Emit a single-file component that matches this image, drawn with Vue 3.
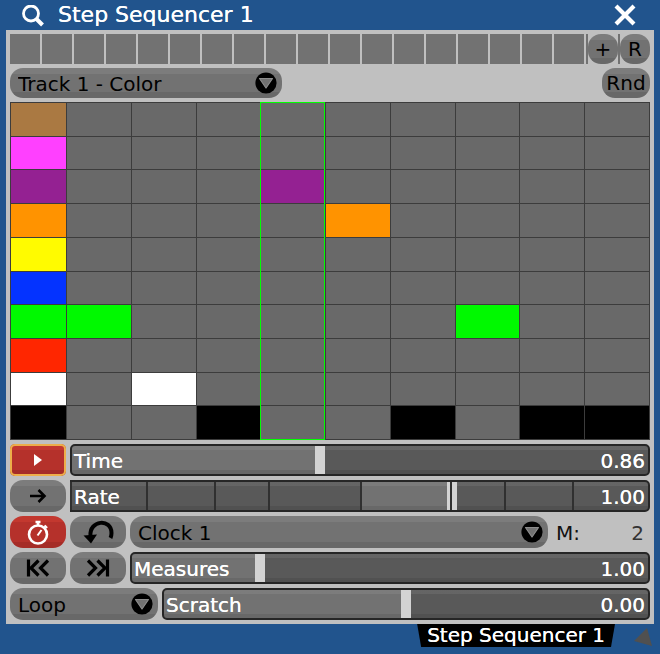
<template>
  <div class="window">
    <header class="title-bar">
      <svg class="icon-search" viewBox="0 0 22 22">
        <circle cx="9" cy="8.5" r="7.5" fill="none" stroke="#fff" stroke-width="2.8" />
        <path d="M14 13.5 L20.5 20" stroke="#fff" stroke-width="4" />
      </svg>
      <h1 class="title">Step Sequencer 1</h1>
      <button class="close" aria-label="Close">
        <svg viewBox="0 0 22 22">
          <path d="M2 2 L20 20 M20 2 L2 20" stroke="#fff" stroke-width="4.2" />
        </svg>
      </button>
    </header>

    <main class="panel">
      <!-- presets -->
      <div class="row presets">
        <div class="preset-strip">
          <button v-for="n in 19" :key="n" class="preset" :aria-label="'Preset ' + n"></button>
        </div>
        <button class="btn round" @click="addPreset">+</button>
        <span class="sliver"></span>
        <button class="btn round">R</button>
      </div>

      <!-- track -->
      <div class="row spread">
        <div class="dropdown track">
          <select v-model="track" class="btn" aria-label="Track">
            <option>Track 1 - Color</option>
          </select>
          <svg class="arrow" viewBox="0 0 22 22">
            <circle cx="11" cy="11" r="10.6" />
            <path d="M4.5 6.5 H17.5 L11 16 Z" fill="#727272" stroke="#8c8c8c" stroke-width="1.2" stroke-linejoin="round" />
          </svg>
        </div>
        <button class="btn rnd" @click="randomize">Rnd</button>
      </div>

      <!-- steps -->
      <div class="steps">
        <template v-for="(color, r) in colors" :key="color">
          <span class="cell" :style="{ background: color, gridRow: r + 1, gridColumn: 1 }"></span>
          <button
            v-for="(value, c) in steps"
            :key="c"
            class="cell"
            :aria-label="'Step ' + (c + 1) + ', row ' + (r + 1)"
            :style="{ background: value === r ? color : null, gridRow: r + 1, gridColumn: c + 2 }"
            @click="toggle(c, r)"
          ></button>
        </template>
        <span class="playhead" :style="{ gridColumn: current + 2 }"></span>
      </div>

      <!-- transport -->
      <div class="row">
        <button class="btn small play" aria-label="Play">
          <svg width="56" height="32" viewBox="0 0 56 32">
            <path d="M24 10 V22 L32 16 Z" fill="#fff" />
          </svg>
        </button>
        <div class="slider">
          <input id="time" v-model.number="time" type="range" min="0" max="2" step="any" :style="fill(time / 2)" />
          <label for="time">Time</label>
          <output for="time">{{ time.toFixed(2) }}</output>
        </div>
      </div>

      <div class="row">
        <button class="btn small" aria-label="Forward">
          <svg width="56" height="32" viewBox="0 0 56 32">
            <path d="M20 16 H34 M28.5 10 L34.5 16 L28.5 22" fill="none" stroke="#000" stroke-width="2.6" />
          </svg>
        </button>
        <div class="slider rate">
          <input id="rate" v-model.number="rate" type="range" min="0" max="1" step="any" :style="fill(rate, 50)" />
          <span v-for="t in ticks" :key="t" class="tick" :style="{ left: t + '%' }"></span>
          <label for="rate">Rate</label>
          <output for="rate">1.00</output>
        </div>
      </div>

      <div class="row">
        <button class="btn small on" aria-label="Clock sync">
          <svg width="56" height="32" viewBox="0 0 56 32">
            <circle cx="28" cy="18.5" r="9" fill="none" stroke="#fff" stroke-width="2.6" />
            <path d="M25.5 6 H30.5 M28 5 V10" stroke="#fff" stroke-width="2.6" />
            <path d="M34.5 9.5 L37 12" stroke="#fff" stroke-width="2.4" />
            <path d="M27.5 19.5 L31.5 14" stroke="#fff" stroke-width="2" />
          </svg>
        </button>
        <button class="btn small" aria-label="Reverse">
          <svg width="56" height="32" viewBox="0 0 56 32">
            <path d="M20.5 20 C19 4 41.5 2 41.5 17 Q41.5 20 40.5 22" fill="none" stroke="#000" stroke-width="4" />
            <path d="M13.5 19.5 L27 18.5 L21 27.5 Z" />
          </svg>
        </button>
        <div class="dropdown grow">
          <select v-model="clock" class="btn" aria-label="Clock">
            <option>Clock 1</option>
          </select>
          <svg class="arrow" viewBox="0 0 22 22">
            <circle cx="11" cy="11" r="10.6" />
            <path d="M4.5 6.5 H17.5 L11 16 Z" fill="#727272" stroke="#8c8c8c" stroke-width="1.2" stroke-linejoin="round" />
          </svg>
        </div>
        <div class="field">
          <label for="multiplier">M:</label>
          <input id="multiplier" v-model="multiplier" type="text" />
        </div>
      </div>

      <div class="row">
        <button class="btn small" aria-label="Previous">
          <svg width="56" height="32" viewBox="0 0 56 32">
            <path d="M18.5 7.5 V24.5 M28.5 8.5 L21 16 L28.5 23.5 M38 8.5 L30.5 16 L38 23.5" fill="none" stroke="#000" stroke-width="3.2" />
          </svg>
        </button>
        <button class="btn small" aria-label="Next">
          <svg width="56" height="32" viewBox="0 0 56 32">
            <path d="M37.5 7.5 V24.5 M27.5 8.5 L35 16 L27.5 23.5 M18 8.5 L25.5 16 L18 23.5" fill="none" stroke="#000" stroke-width="3.2" />
          </svg>
        </button>
        <div class="slider">
          <input id="measures" v-model.number="measures" type="range" min="0" max="1" step="any" :style="fill(measures)" />
          <label for="measures">Measures</label>
          <output for="measures">1.00</output>
        </div>
      </div>

      <div class="row">
        <div class="dropdown mode">
          <select v-model="mode" class="btn" aria-label="Mode">
            <option>Loop</option>
          </select>
          <svg class="arrow" viewBox="0 0 22 22">
            <circle cx="11" cy="11" r="10.6" />
            <path d="M4.5 6.5 H17.5 L11 16 Z" fill="#727272" stroke="#8c8c8c" stroke-width="1.2" stroke-linejoin="round" />
          </svg>
        </div>
        <div class="slider">
          <input id="scratch" v-model.number="scratch" type="range" min="-1" max="1" step="any" :style="fill((scratch + 1) / 2)" />
          <label for="scratch">Scratch</label>
          <output for="scratch">{{ scratch.toFixed(2) }}</output>
        </div>
      </div>
    </main>

    <footer class="status">
      <span class="tab">Step Sequencer 1</span>
      <svg class="grip" width="20" height="20" viewBox="0 0 20 20">
        <path d="M14 0 L1 13 L19 18 Z" fill="#505050" />
      </svg>
    </footer>
  </div>
</template>

<script setup>
import { ref } from 'vue'

const colors = [
  '#aa7942', '#ff40ff', '#942192', '#ff9300', '#fffb00',
  '#0433ff', '#00f900', '#ff2600', '#ffffff', '#000000'
]
// row index of the active color for each step
const steps = ref([6, 8, 9, 2, 3, 9, 6, 9, 9])
const current = ref(3)

const track = ref('Track 1 - Color')
const clock = ref('Clock 1')
const mode = ref('Loop')
const multiplier = ref('2')

const time = ref(0.86)
const rate = ref(0.662)
const measures = ref(0.243)
const scratch = ref(0)
const presetCount = ref(0)

// tick positions on the rate slider, in percent
const ticks = [0, 13.1, 24.8, 34.1, 50, 65.6, 74.8, 86.6]

function fill(ratio, from = 0) {
  return { '--from': from + '%', '--to': ratio * 100 + '%' }
}

function toggle(c, r) {
  steps.value[c] = steps.value[c] === r ? -1 : r
}

function addPreset() { presetCount.value++ }

function randomize() {
  steps.value = steps.value.map(() => Math.floor(Math.random() * colors.length))
}
</script>

<style>
body { margin: 0; background: #21548d; }
</style>

<style scoped>
* { box-sizing: border-box; }
.window {
  display: flex;
  flex-direction: column;
  min-height: 100vh;
  padding: 0 6px;
  background: #21548d;
  font-family: "DejaVu Sans", sans-serif;
  font-size: 20px;
  line-height: 24px;
}
button, select, input { font: inherit; margin: 0; }
button { padding: 0; border: 0; }
svg { display: block; }

.title-bar { display: flex; align-items: center; height: 30px; padding: 0 18px 0 16px; color: #fff; }
.icon-search { width: 22px; height: 22px; margin-top: 2px; }
.title { flex: 1; margin: 0 0 0 14px; font-size: 22px; font-weight: normal; line-height: 32px; }
.close { width: 22px; height: 22px; background: none; }
/* light text is drawn slightly heavier */
.title, .slider label, .slider output, .tab { text-shadow: 0 0 0 #fff; }

.panel { flex: 1; display: flex; flex-direction: column; gap: 4px; padding: 4px; background: #c0c0c0; }
.row { display: flex; gap: 4px; height: 32px; }
.presets, .spread { height: 30px; }
.presets { gap: 0; }
.spread { justify-content: space-between; }

.preset-strip { flex: 1; display: flex; gap: 2px; overflow: hidden; }
.preset { flex: none; width: 30px; background: #727272; }
.sliver { width: 2px; background: #727272; }

.btn {
  border: 0;
  border-radius: 13px;
  color: #000;
  background: linear-gradient(#7c7c7c 6px, #727272 6px, #727272 calc(100% - 6px), #686868 calc(100% - 6px));
}
.round { width: 30px; }
.rnd { width: 48px; }
.small { flex: none; width: 56px; }
.on, .play { background: linear-gradient(#c3382f 6px, #b5312b 6px, #b5312b calc(100% - 6px), #a52c27 calc(100% - 6px)); }
.play { border-radius: 5px; box-shadow: inset 0 0 0 2px #edae49; }

.dropdown { position: relative; display: flex; }
.dropdown select { width: 100%; padding: 1px 40px 0 8px; appearance: none; outline: none; }
.arrow { position: absolute; right: 5px; top: 50%; width: 22px; height: 22px; margin-top: -11px; pointer-events: none; }
.track { width: 272px; }
.mode { flex: none; width: 148px; }
.grow { flex: 1; }

.steps {
  flex: 1;
  display: grid;
  grid-template-columns: 55px repeat(9, 1fr);
  grid-template-rows: repeat(10, minmax(24px, 1fr));
  gap: 1px;
  padding: 1px;
  background: #3c3c3c;
}
.cell { background: #696969; }
.playhead { grid-row: 1 / -1; margin: -1px 0 -1px -1px; border: 1px solid #00ff00; pointer-events: none; }

.slider { position: relative; flex: 1; display: flex; justify-content: space-between; align-items: center; padding: 1px 5px 0 4px; color: #fff; }
.slider label, .slider output { position: relative; pointer-events: none; }
.slider input {
  position: absolute;
  inset: 0;
  width: 100%;
  height: 100%;
  appearance: none;
  border: 2px solid #262626;
  border-radius: 5px;
  outline: none;
  background:
    linear-gradient(rgba(255, 255, 255, 0.07) 4px, transparent 4px, transparent calc(100% - 4px), rgba(0, 0, 0, 0.09) calc(100% - 4px)),
    linear-gradient(90deg, #595959 var(--from), #727272 var(--from), #727272 var(--to), #595959 var(--to));
}
.slider input::-webkit-slider-thumb { appearance: none; width: 10px; height: 28px; background: #d3d3d3; }
.rate input { border-radius: 0 5px 5px 0; }
.tick { position: absolute; top: 2px; bottom: 2px; width: 2px; background: #303030; pointer-events: none; }

.field { display: flex; align-items: center; width: 98px; padding: 1px 6px 0 4px; color: #111; }
.field input { flex: 1; min-width: 0; padding: 0; border: 0; outline: none; background: none; color: #333; text-align: right; }

.status { display: flex; justify-content: flex-end; height: 30px; }
.tab {
  height: 23px;
  padding: 0 10px;
  color: #fff;
  line-height: 22px;
  background: #000;
  clip-path: polygon(0 0, 100% 0, calc(100% - 4px) 100%, 4px 100%);
}
.grip { margin: 4px 1px 0 18px; }
</style>
